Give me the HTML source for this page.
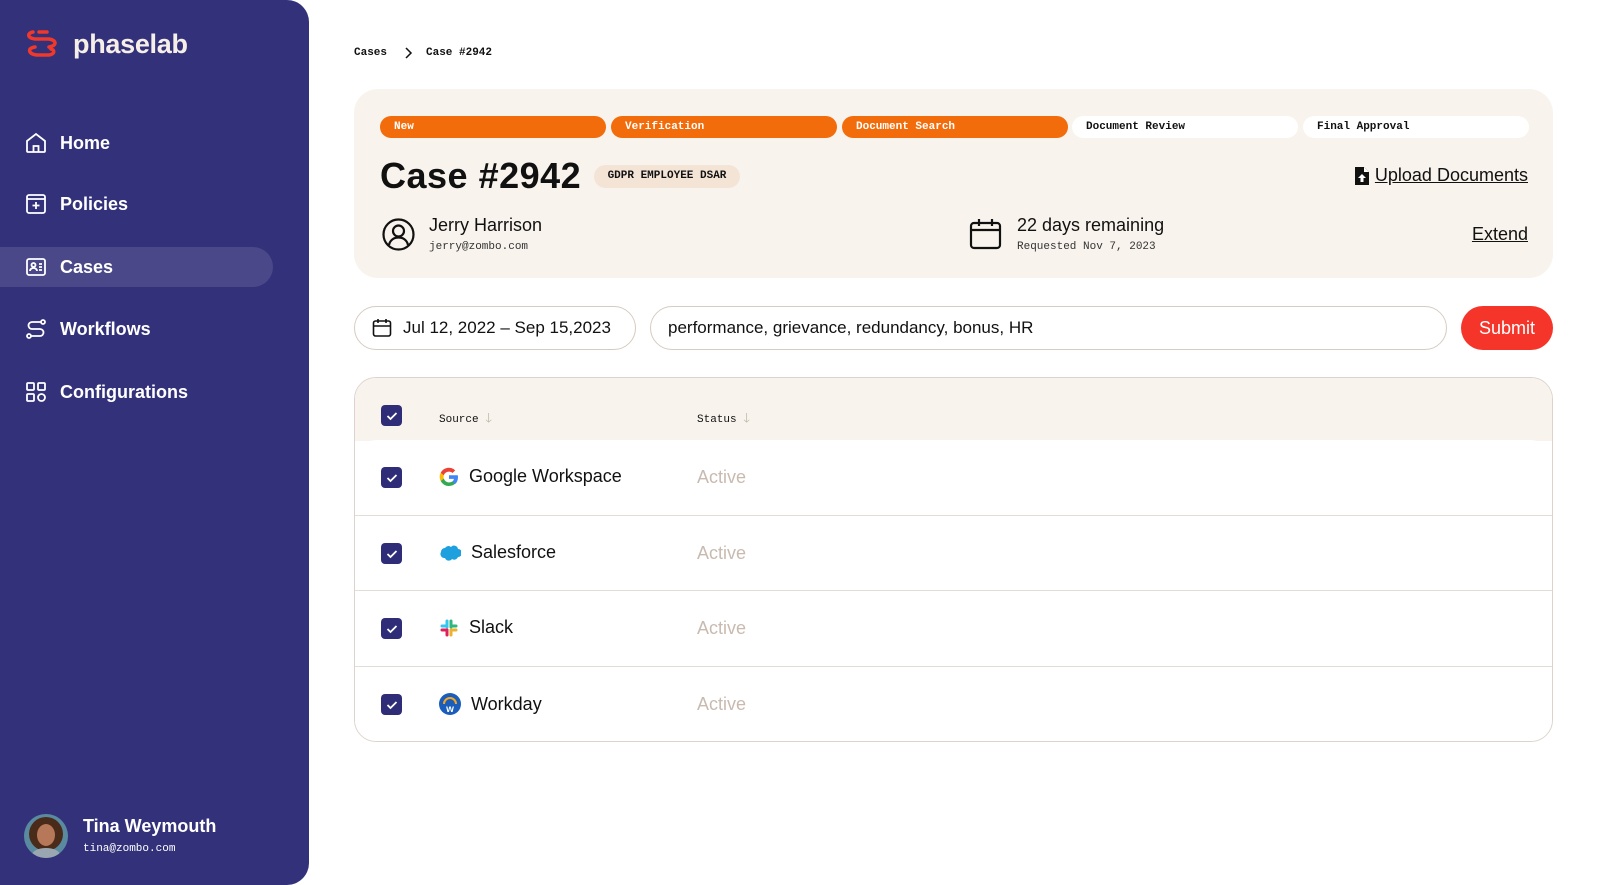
<!DOCTYPE html>
<html><head><meta charset="utf-8"><style>
*{box-sizing:border-box;margin:0;padding:0}
body{width:1600px;height:885px;background:#fff;font-family:"Liberation Sans",sans-serif;color:#111;position:relative;overflow:hidden}
.mono{font-family:"Liberation Mono",monospace}
.sb{position:absolute;left:0;top:0;width:309px;height:885px;background:#33317a;border-radius:0 22px 22px 0}
.logo{position:absolute;left:25px;top:28px;display:flex;align-items:center;gap:10px;color:#f6efe8;font-weight:bold;font-size:27px;letter-spacing:-0.3px}
.nav{position:absolute;left:0;width:273px;height:40px;display:flex;align-items:center;color:#fff;font-size:18px;font-weight:bold}
.nav svg{position:absolute;left:25px}
.nav span{position:absolute;left:60px}
.nav.act{background:#4a4888;border-radius:0 20px 20px 0}
.abs{position:absolute}
.card{position:absolute;left:354px;top:89px;width:1199px;height:189px;background:#f8f3ec;border-radius:24px}
.step{position:absolute;top:116px;height:22px;width:226px;border-radius:11px;font-size:11px;font-weight:bold;padding-left:14px;line-height:22px;font-family:"Liberation Mono",monospace}
.on{background:#f36c0c;color:#fff}.off{background:#fff;color:#111}
.inp{position:absolute;top:306px;height:44px;border:1px solid #d6cbc3;border-radius:22px;font-size:17px;display:flex;align-items:center}
.tbl{position:absolute;left:354px;top:377px;width:1199px;height:365px;border:1px solid #ddd3cc;border-radius:22px;overflow:hidden;background:#fff}
.th{position:absolute;left:0;top:0;width:100%;height:63px;background:#f8f3ec}
.row{position:absolute;left:0;width:100%;height:76px;border-top:1px solid #e3ddd8;background:#fff}
.cb{position:absolute;left:26px;width:21px;height:21px;background:#2f2d78;border-radius:4px;display:flex;align-items:center;justify-content:center}
.rt{position:absolute;left:116px;font-size:18px;display:flex;align-items:center;gap:10px}
.st{position:absolute;left:342px;font-size:18px;color:#c9bab0}
</style></head><body>
<div class="sb">
 <div class="logo"><svg width="36" height="32" viewBox="0 0 36 32"><g fill="none" stroke="#f0392b" stroke-width="3.5" stroke-linecap="round"><path d="M8 4 C2 5 2 10 10 11 L24 11 C32 12 32 18 24 19"/><path d="M14 4 L22 4"/><path d="M10 19 C2 20 3 26 12 27 L24 27 C30 26 30 22 26 21"/></g></svg><span style="margin-left:2px">phaselab</span></div>
 <div class="nav" style="top:123px"><svg width="22" height="22" viewBox="0 0 22 22" fill="none" stroke="#fff" stroke-width="1.8"><path d="M2 9 L11 2 L20 9 V19 a1 1 0 0 1-1 1 H3 a1 1 0 0 1-1-1Z"/><path d="M8.5 20 V14 h5 v6"/></svg><span>Home</span></div>
 <div class="nav" style="top:184px"><svg width="22" height="22" viewBox="0 0 22 22" fill="none" stroke="#fff" stroke-width="1.8"><rect x="2" y="2" width="18" height="18" rx="2"/><path d="M2 6h18M11 9v7M7.5 12.5h7"/></svg><span>Policies</span></div>
 <div class="nav act" style="top:247px"><svg width="22" height="22" viewBox="0 0 22 22" fill="none" stroke="#fff" stroke-width="1.8"><rect x="2" y="3" width="18" height="16" rx="2"/><circle cx="8.5" cy="9" r="2"/><path d="M5 15c0-2 2-3 3.5-3s3.5 1 3.5 3M14 8h3M14 11h3M14 14h3"/></svg><span>Cases</span></div>
 <div class="nav" style="top:309px"><svg width="22" height="22" viewBox="0 0 22 22" fill="none" stroke="#fff" stroke-width="1.8"><circle cx="18" cy="4" r="2"/><circle cx="4" cy="18" r="2"/><path d="M16 4H7a3.5 3.5 0 0 0 0 7h8a3.5 3.5 0 0 1 0 7H6"/></svg><span>Workflows</span></div>
 <div class="nav" style="top:372px"><svg width="22" height="22" viewBox="0 0 22 22" fill="none" stroke="#fff" stroke-width="1.8"><rect x="2" y="2" width="7" height="7" rx="1"/><rect x="13" y="2" width="7" height="7" rx="1"/><rect x="2" y="13" width="7" height="7" rx="1"/><circle cx="16.5" cy="16.5" r="3.5"/></svg><span>Configurations</span></div>
 <div class="abs" style="left:24px;top:814px;width:44px;height:44px;border-radius:50%;background:#5a8aa0;overflow:hidden"><div style="position:absolute;left:5px;top:3px;width:34px;height:34px;border-radius:50%;background:#4a2a18"></div><div style="position:absolute;left:13px;top:10px;width:18px;height:22px;border-radius:50%;background:#b7785a"></div><div style="position:absolute;left:8px;top:34px;width:28px;height:14px;border-radius:50%;background:#9aa6b0"></div></div>
 <div class="abs" style="left:83px;top:816px;color:#fff;font-weight:bold;font-size:18px">Tina Weymouth</div>
 <div class="abs mono" style="left:83px;top:843px;color:#fff;font-size:11px">tina@zombo.com</div>
</div>

<div class="abs mono" style="left:354px;top:47px;font-size:11px;font-weight:bold">Cases</div>
<svg class="abs" style="left:403px;top:46px" width="10" height="14" viewBox="0 0 10 14"><path d="M3 2l5 5-5 5" fill="none" stroke="#111" stroke-width="1.5"/></svg>
<div class="abs mono" style="left:426px;top:47px;font-size:11px;font-weight:bold">Case #2942</div>

<div class="card"></div>
<div class="step on" style="left:380px">New</div>
<div class="step on" style="left:611px">Verification</div>
<div class="step on" style="left:842px">Document Search</div>
<div class="step off" style="left:1072px">Document Review</div>
<div class="step off" style="left:1303px">Final Approval</div>

<div class="abs" style="left:380px;top:155px;font-size:36px;font-weight:bold;letter-spacing:0.5px">Case #2942</div>
<div class="abs mono" style="left:594px;top:165px;width:146px;height:23px;background:#f4e4d6;border-radius:12px;font-size:11px;font-weight:bold;line-height:23px;text-align:center">GDPR EMPLOYEE DSAR</div>
<div class="abs" style="right:72px;top:165px;font-size:18px;display:flex;align-items:center;gap:6px"><svg width="14" height="18" viewBox="0 0 14 18"><path d="M0 0h9l5 5v13H0z" fill="#111"/><path d="M9 0v5h5" fill="#fff"/><path d="M7 7l-4 4h2.5v4h3v-4H11z" fill="#fff"/></svg><span style="text-decoration:underline">Upload Documents</span></div>

<svg class="abs" style="left:382px;top:218px" width="33" height="33" viewBox="0 0 33 33" fill="none" stroke="#111" stroke-width="2.2"><circle cx="16.5" cy="16.5" r="15"/><circle cx="16.5" cy="13" r="5.5"/><path d="M7 27c1-5 5-7.5 9.5-7.5S25 22 26 27"/></svg>
<div class="abs" style="left:429px;top:215px;font-size:18px">Jerry Harrison</div>
<div class="abs mono" style="left:429px;top:241px;font-size:11px;color:#333">jerry@zombo.com</div>

<svg class="abs" style="left:969px;top:218px" width="33" height="32" viewBox="0 0 33 32" fill="none" stroke="#111" stroke-width="2.2"><rect x="2" y="5" width="29" height="25" rx="3"/><path d="M2 12h29M10 1v7M23 1v7"/></svg>
<div class="abs" style="left:1017px;top:215px;font-size:18px">22 days remaining</div>
<div class="abs mono" style="left:1017px;top:241px;font-size:11px;color:#333">Requested Nov 7, 2023</div>
<div class="abs" style="right:72px;top:224px;font-size:18px;text-decoration:underline">Extend</div>

<div class="inp" style="left:354px;width:282px;padding-left:17px"><svg width="20" height="20" viewBox="0 0 20 20" fill="none" stroke="#111" stroke-width="1.6"><rect x="1.5" y="3" width="17" height="15" rx="2"/><path d="M1.5 8h17M6 1v4M14 1v4"/></svg><span style="margin-left:11px">Jul 12, 2022 – Sep 15,2023</span></div>
<div class="inp" style="left:650px;width:797px;padding-left:17px">performance, grievance, redundancy, bonus, HR</div>
<div class="abs" style="left:1461px;top:306px;width:92px;height:44px;border-radius:22px;background:#f5352a;color:#fff;font-size:18px;line-height:44px;text-align:center">Submit</div>

<div class="tbl">
 <div class="th">
  <div class="cb" style="top:27px"><svg width="12" height="10" viewBox="0 0 12 10"><path d="M1.5 5l3 3 6-6" fill="none" stroke="#fff" stroke-width="1.8"/></svg></div>
  <div class="abs mono" style="left:84px;top:31px;font-size:11px">Source <span style="color:#bba;font-size:13px">🡓</span></div>
  <div class="abs mono" style="left:342px;top:31px;font-size:11px">Status <span style="color:#bba;font-size:13px">🡓</span></div>
 </div>
 <div class="row" style="top:62px;border-top:none;border-radius:22px 22px 0 0">
  <div class="cb" style="top:27px"><svg width="12" height="10" viewBox="0 0 12 10"><path d="M1.5 5l3 3 6-6" fill="none" stroke="#fff" stroke-width="1.8"/></svg></div>
  <div class="rt" style="left:84px;top:26px"><svg width="20" height="20" viewBox="0 0 20 20"><path d="M19 10.2c0-.7-.1-1.3-.2-1.9H10v3.6h5a4.3 4.3 0 0 1-1.9 2.8v2.3h3C18 15.4 19 13 19 10.2z" fill="#4285f4"/><path d="M10 19c2.5 0 4.6-.8 6.1-2.2l-3-2.3c-.8.6-1.9.9-3.1.9-2.4 0-4.4-1.6-5.2-3.8H1.7v2.4A9 9 0 0 0 10 19z" fill="#34a853"/><path d="M4.8 11.6a5.400 5.400 0 0 1 0-3.4V5.8H1.7a9 9 0 0 0 0 8.2z" fill="#fbbc05"/><path d="M10 4.6c1.4 0 2.6.5 3.5 1.400l2.700-2.600A9 9 0 0 0 1.700 5.800l3.100 2.400C5.600 6.100 7.600 4.600 10 4.600z" fill="#ea4335"/></svg><span>Google Workspace</span></div>
  <div class="st" style="top:27px">Active</div>
 </div>
 <div class="row" style="top:137px">
  <div class="cb" style="top:27px"><svg width="12" height="10" viewBox="0 0 12 10"><path d="M1.5 5l3 3 6-6" fill="none" stroke="#fff" stroke-width="1.8"/></svg></div>
  <div class="rt" style="left:84px;top:26px"><svg width="22" height="16" viewBox="0 0 22 16"><path d="M6 3a4 4 0 0 1 6-1 4 4 0 0 1 7 2 4 4 0 0 1 0 8 4 4 0 0 1-6 2 4 4 0 0 1-7-1 4 4 0 0 1-4-6 4 4 0 0 1 4-4z" fill="#1ea0de"/></svg><span>Salesforce</span></div>
  <div class="st" style="top:27px">Active</div>
 </div>
 <div class="row" style="top:212px">
  <div class="cb" style="top:27px"><svg width="12" height="10" viewBox="0 0 12 10"><path d="M1.5 5l3 3 6-6" fill="none" stroke="#fff" stroke-width="1.8"/></svg></div>
  <div class="rt" style="left:84px;top:26px"><svg width="20" height="20" viewBox="0 0 20 20" stroke-width="3" stroke-linecap="round"><path d="M8 3v6" stroke="#36c5f0"/><path d="M3 8h5" stroke="#36c5f0"/><path d="M12 3v6" stroke="#2eb67d"/><path d="M12 8h5" stroke="#2eb67d"/><path d="M12 12v5" stroke="#ecb22e"/><path d="M12 12h5" stroke="#ecb22e"/><path d="M8 12v5" stroke="#e01e5a"/><path d="M3 12h5" stroke="#e01e5a"/></svg><span>Slack</span></div>
  <div class="st" style="top:27px">Active</div>
 </div>
 <div class="row" style="top:288px">
  <div class="cb" style="top:27px"><svg width="12" height="10" viewBox="0 0 12 10"><path d="M1.5 5l3 3 6-6" fill="none" stroke="#fff" stroke-width="1.8"/></svg></div>
  <div class="rt" style="left:84px;top:26px"><svg width="22" height="22" viewBox="0 0 22 22"><circle cx="11" cy="11" r="11" fill="#1a5dba"/><path d="M5 11a6 6 0 0 1 12 0" fill="none" stroke="#f5a623" stroke-width="2"/><text x="11" y="19" font-size="10" font-weight="bold" fill="#fff" text-anchor="middle" font-family="Liberation Sans">w</text></svg><span>Workday</span></div>
  <div class="st" style="top:27px">Active</div>
 </div>
</div>
</body></html>
